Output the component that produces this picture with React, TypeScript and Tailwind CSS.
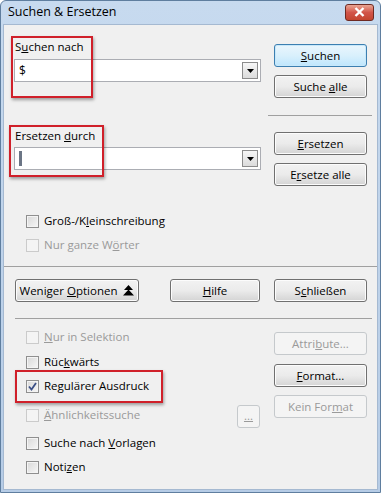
import clsx from 'clsx';
import type { ReactNode } from 'react';

const font = { fontFamily: '"Open Sans", "Noto Sans", sans-serif' };

function Btn({
  children,
  className,
  disabled,
  focus,
}: {
  children: ReactNode;
  className?: string;
  disabled?: boolean;
  focus?: boolean;
}) {
  return (
    <div
      className={clsx(
        'h-[23px] rounded-[3px] border flex items-center justify-center text-[11.5px] leading-none',
        disabled
          ? 'border-[#c5c9cc] bg-[#f4f4f4] text-[#9a9a9a]'
          : focus
            ? 'border-[#3c7fb1] bg-gradient-to-b from-[#eaf6fd] via-[#d9f0fc] to-[#bee6fd] text-black shadow-[inset_0_0_0_1px_#c8e8fa]'
            : 'border-[#707070] bg-gradient-to-b from-[#f2f2f2] via-[#ebebeb] to-[#d4d4d4] text-black shadow-[inset_0_0_0_1px_#fcfcfc]',
        className
      )}
    >
      {children}
    </div>
  );
}

function Check({
  children,
  disabled,
  checked,
  className,
}: {
  children: ReactNode;
  disabled?: boolean;
  checked?: boolean;
  className?: string;
}) {
  return (
    <div className={clsx('h-[20px] flex items-center pl-[22px]', className)}>
      <div
        className={clsx(
          'w-[13px] h-[13px] border flex items-center justify-center',
          disabled
            ? 'border-[#cbcbcb] bg-[#f4f4f4]'
            : 'border-[#8f8f8f] bg-gradient-to-br from-[#d8d8d8] to-[#f7f7f7] shadow-[inset_0_0_0_1px_#f4f4f4]'
        )}
      >
        {checked && (
          <svg width="9" height="9" viewBox="0 0 9 9">
            <path d="M1 4.5 L3.5 7.5 L8 1" fill="none" stroke="#3b4f86" strokeWidth="1.8" />
          </svg>
        )}
      </div>
      <span
        className={clsx(
          'ml-[5px] text-[11.5px] leading-none',
          disabled ? 'text-[#9a9a9a]' : 'text-black'
        )}
      >
        {children}
      </span>
    </div>
  );
}

function Combo({ children }: { children?: ReactNode }) {
  return (
    <div className="h-[23px] w-[247px] border border-[#abadb3] bg-white flex items-center justify-between pl-[4px] pr-[2px]">
      <div className="text-[12px] leading-none text-black">{children}</div>
      <div className="w-[16px] h-[17px] border border-[#8c8c8c] bg-gradient-to-b from-[#f6f6f6] to-[#dcdcdc] flex items-center justify-center">
        <svg width="7" height="4" viewBox="0 0 7 4">
          <path d="M0 0 H7 L3.5 4Z" fill="#000" />
        </svg>
      </div>
    </div>
  );
}

export default function App() {
  return (
    <div
      className="relative w-[381px] h-[493px] flex flex-col border border-[#5f7e9f] rounded-t-[6px] bg-gradient-to-b from-[#c7daef] to-[#b6cce6]"
      style={font}
    >
      {/* title bar */}
      <div className="h-[23px] flex items-center justify-between pl-[7px] pr-[6px]">
        <span className="text-[12.5px] text-black">Suchen &amp; Ersetzen</span>
        <div className="w-[29px] h-[17px] mt-[-1px] rounded-[3px] border border-[#6e2a22] bg-gradient-to-b from-[#e8a493] via-[#d2554a] to-[#c3452f] flex items-center justify-center">
          <svg width="11" height="10" viewBox="0 0 11 10">
            <path d="M1.5 1 L9.5 9 M9.5 1 L1.5 9" stroke="#fff" strokeWidth="2.4" />
          </svg>
        </div>
      </div>

      {/* client area */}
      <div className="flex-1 mx-[2px] mb-[2px] bg-[#f0f0f0] border border-[#a5b9d1] flex flex-col">
        <div className="flex">
          <div className="ml-[10px] w-[247px] flex flex-col">
            <div className="mt-[14px] h-[15px] pl-[1px] text-[11.5px] leading-[15px]">
              S<u>u</u>chen nach
            </div>
            <div className="mt-[5px]">
              <Combo>$</Combo>
            </div>
            <div className="mt-[46px] h-[15px] pl-[1px] text-[11.5px] leading-[15px]">
              Ersetzen <u>d</u>urch
            </div>
            <div className="mt-[4px]">
              <Combo>
                <div className="w-[3px] h-[15px] bg-[#6b7585]" />
              </Combo>
            </div>
          </div>
          <div className="ml-[13px] w-[93px] flex flex-col">
            <Btn focus className="mt-[19px]">
              <span>
                <u>S</u>uchen
              </span>
            </Btn>
            <Btn className="mt-[8px]">
              <span>
                Suche <u>a</u>lle
              </span>
            </Btn>
            <div className="mt-[17px] -ml-[6px] w-[104px] h-px bg-[#a0a0a0]" />
            <Btn className="mt-[16px]">
              <span>
                <u>E</u>rsetzen
              </span>
            </Btn>
            <Btn className="mt-[8px]">
              <span>
                E<u>r</u>setze alle
              </span>
            </Btn>
          </div>
        </div>

        <Check className="mt-[25px]">
          Groß-/K<u>l</u>einschreibung
        </Check>
        <Check disabled className="mt-[4px]">
          Nur ganze W<u>ö</u>rter
        </Check>

        <div className="mt-[11px] h-px bg-[#a0a0a0]" />

        <div className="mt-[12px] flex">
          <Btn className="ml-[11px] w-[124px] gap-[6px]">
            <span>
              Weniger <u>O</u>ptionen
            </span>
            <svg width="11" height="11" viewBox="0 0 11 11">
              <path d="M5.5 0 L10 5 L1 5Z M5.5 4.5 L11 10.5 L0 10.5Z" fill="#000" />
            </svg>
          </Btn>
          <Btn className="ml-[31px] w-[90px]">
            <span>
              <u>H</u>ilfe
            </span>
          </Btn>
          <Btn className="ml-[14px] w-[93px]">
            <span>
              S<u>c</u>hließen
            </span>
          </Btn>
        </div>

        <div className="mt-[16px] ml-[11px] mr-[5px] h-px bg-[#a0a0a0]" />

        <div className="flex">
          <div className="flex-1 flex flex-col">
            <Check disabled className="mt-[8px]">
              <u>N</u>ur in Selektion
            </Check>
            <Check className="mt-[5px]">
              Rüc<u>k</u>wärts
            </Check>
            <Check checked className="mt-[4px]">
              Re<u>g</u>ulärer Ausdruck
            </Check>
            <Check disabled className="mt-[9px]">
              <u>Ä</u>hnlichkeitssuche
            </Check>
            <Check className="mt-[8px]">
              Suche nach <u>V</u>orlagen
            </Check>
            <Check className="mt-[4px]">
              Noti<u>z</u>en
            </Check>
          </div>
          <Btn disabled className="mt-[86px] w-[23px] mr-[14px] items-start pt-[4px]">
            <u>...</u>
          </Btn>
          <div className="w-[93px] mr-[10px] flex flex-col">
            <Btn disabled className="mt-[13px]">
              <span>
                Attri<u>b</u>ute...
              </span>
            </Btn>
            <Btn className="mt-[9px]">
              <span>
                <u>F</u>ormat...
              </span>
            </Btn>
            <Btn disabled className="mt-[8px]">
              <span>
                Kein For<u>m</u>at
              </span>
            </Btn>
          </div>
        </div>
      </div>

      {/* red annotation boxes */}
      <div className="absolute left-[10px] top-[35px] w-[82px] h-[62px] border-2 border-[#d0202a] shadow-[1px_2px_3px_rgba(0,0,0,0.35)]" />
      <div className="absolute left-[8px] top-[124px] w-[95px] h-[52px] border-2 border-[#d0202a] shadow-[1px_2px_3px_rgba(0,0,0,0.35)]" />
      <div className="absolute left-[14px] top-[369px] w-[148px] h-[33px] border-2 border-[#d0202a] shadow-[1px_2px_3px_rgba(0,0,0,0.35)]" />
    </div>
  );
}
